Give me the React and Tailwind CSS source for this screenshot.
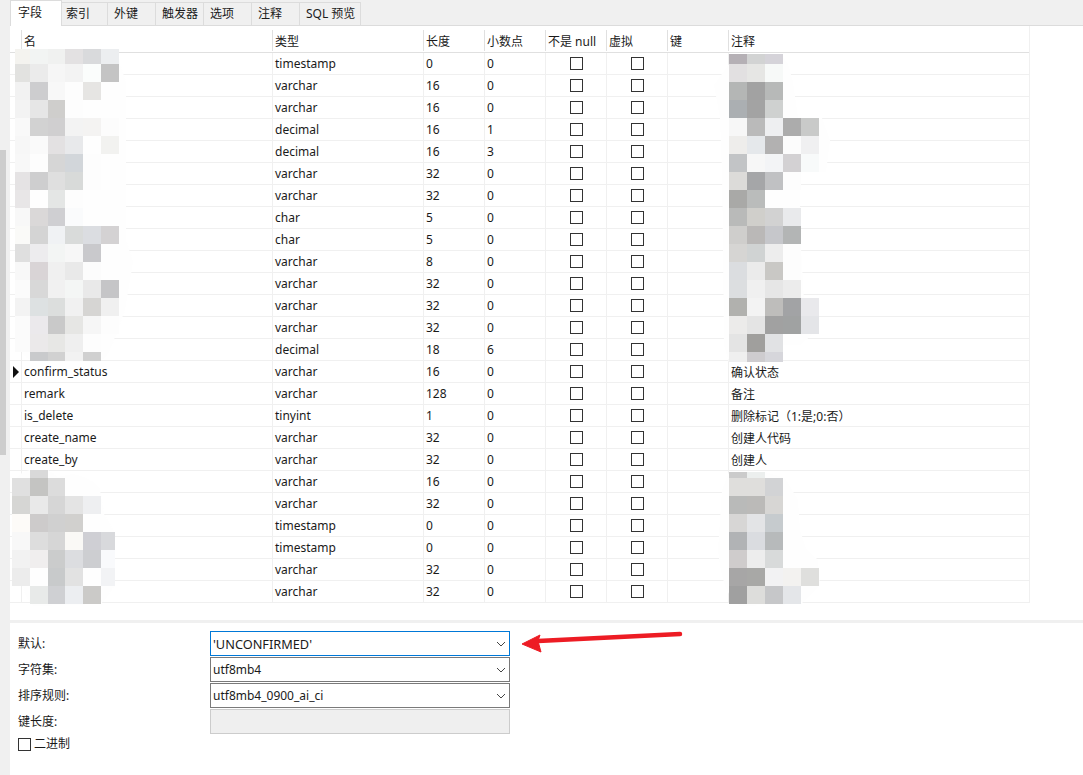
const rows = [
  ["", "timestamp", "0", "0", ""],
  ["", "varchar", "16", "0", ""],
  ["", "varchar", "16", "0", ""],
  ["", "decimal", "16", "1", ""],
  ["", "decimal", "16", "3", ""],
  ["", "varchar", "32", "0", ""],
  ["", "varchar", "32", "0", ""],
  ["", "char", "5", "0", ""],
  ["", "char", "5", "0", ""],
  ["", "varchar", "8", "0", ""],
  ["", "varchar", "32", "0", ""],
  ["", "varchar", "32", "0", ""],
  ["", "varchar", "32", "0", ""],
  ["", "decimal", "18", "6", ""],
  ["confirm_status", "varchar", "16", "0", "确认状态"],
  ["remark", "varchar", "128", "0", "备注"],
  ["is_delete", "tinyint", "1", "0", "删除标记（1:是;0:否）"],
  ["create_name", "varchar", "32", "0", "创建人代码"],
  ["create_by", "varchar", "32", "0", "创建人"],
  ["", "varchar", "16", "0", ""],
  ["", "varchar", "32", "0", ""],
  ["", "timestamp", "0", "0", ""],
  ["", "timestamp", "0", "0", ""],
  ["", "varchar", "32", "0", ""],
  ["", "varchar", "32", "0", ""],
];

const tabs = [
  ["索引", "w-[46px] pl-[4px]"],
  ["外键", "w-[48px] pl-[6px]"],
  ["触发器", "w-[48px] pl-[6px]"],
  ["选项", "w-[48px] pl-[6px]"],
  ["注释", "w-[48px] pl-[6px]"],
  ["SQL 预览", "w-[61px] pl-[6px]"],
];

const F = "fff";
const mosaics = [
  {
    xs: [15, 30, 48, 65, 83, 101, 119],
    ys: [49, 64, 82, 100, 118, 136, 154, 172, 190, 208, 226, 244, 262, 280, 298, 316, 334, 352, 361],
    cells: [
      ["f4f3ef", "f2f4f3", "f0f1f0", "e3e1e2", "d9dadc", "eceef0"],
      ["e2e2e0", "ebebeb", "f6f6f6", "f3f3f3", "fbfdfc", "c4c4c4"],
      ["f2f2f2", "cdcdcf", "f8f8f8", "fdfdfd", "e6e5e3", F],
      ["f3f3f3", "e6e6e6", "cfcecc", "fdfdfd", F, F],
      ["f9f9f9", "d2d2d2", "d0cfd0", "f3f3f3", "f4f3f2", "fcfcfc"],
      ["f7f7f7", "fafafa", "e3e1e2", "e8e9eb", F, "f2f2f0"],
      ["f8f8f8", "fdfdfd", "d6d6d6", "d2d6da", "fdfdfd", F],
      ["e5e3e4", "cececf", "dfdfdf", "d8dad9", "fdfdfd", F],
      ["e8e6e7", F, "e4e6e5", "fdfdfd", F, F],
      ["f8f8f8", "dad8d8", "cfcfd2", "fafbfc", F, F],
      ["fafaf8", "d4d4d4", "f0f2f4", "d9dbda", "dbdde1", "d4d2d3"],
      ["dfdfdf", "edecee", "f3f5f4", "f7f7f7", "c9c9cc", F],
      ["f8f8f8", "d9d4d6", "f0f0f0", "e9e9e9", "fcfcfc", F],
      ["fbfbfb", "d8d8d8", "f1f1f1", "f4f6f5", "e9e9e9", "c5c5c7"],
      ["f3f3f3", "dde1e2", "dcdedd", "f1f1f1", "d6d5d3", "f0f0f0"],
      ["fbfbfb", "ebe9ec", "c9c9c9", "e6e6e4", "f6f6f6", "fdfdfd"],
      ["fbfbfb", "ebe9ea", "e7e7e5", "efefef", "fdfdfd", F],
      [F, "c9cacc", "d1d1d1", "f2f2f2", "d0d0d0", F],
    ],
  },
  {
    xs: [729, 747, 765, 783, 801, 819],
    ys: [54, 64, 82, 100, 118, 136, 154, 172, 190, 208, 226, 244, 262, 280, 298, 316, 334, 352, 362],
    cells: [
      ["b5b0b5", "d2d3d3", "d5d3d9"],
      ["e2e0e1", "e6e6e4", "f7f9f8"],
      ["b4b6b5", "a2a2a2", "b7b9b8"],
      ["abafb2", "a3a3a3", "cfd1d0"],
      ["f7f7f7", "bababa", "eeeff1", "acacac", "c9cac9"],
      ["eeedeb", "e5e8eb", "b2b1b1", "fcfcfc", "f0f0f1"],
      ["c2c4c6", "f7f7f7", "f3f4f6", "d3d1d3", "f8fafa"],
      ["dcdbd9", "a5a6a8", "c0c1c3", "fdfdfd"],
      ["a9a9a7", "babcbb", F, F],
      ["b9bab9", "d0cfcb", "d2d2d2", "e9eaec"],
      ["cfcecc", "bab8b7", "c6c7cb", "b3b5b5"],
      ["d6d5d3", "d0d3d3", "ededed", "fdfdfd"],
      ["dbdde0", "ebebeb", "c9c8c5", "fdfdfd"],
      ["dcdee0", "f0f0f0", "e6e6e6", "ececec"],
      ["b1b1ae", "f3f3f3", "bebdbb", "a2a3a5", "e9e9ec"],
      ["ecebea", "e4e4e4", "a1a1a1", "a0a2a2", "e4e5e8"],
      ["e4e4e4", "a09f9d", "e1e2e4"],
      ["efefef", "cecccf", "d6d6db"],
    ],
  },
  {
    xs: [12, 30, 48, 65, 83, 101, 115],
    ys: [470, 478, 496, 514, 532, 550, 568, 586, 604],
    cells: [
      [F, "d9d9d9", F],
      ["e0e0e0", "c4c4c2", "dcdcdc", F, F],
      ["d6d6d4", "e9e9e9", "d6d6d6", "e4e4e4", "eeeff1"],
      ["fdfbf8", "cdcbcb", "d0d0d0", "d1d0ce", "fefefe"],
      ["f8f8f8", "dddddd", "d6d6d6", "faf9f6", "cfcfd4", "d8d9dc"],
      ["f2f2f2", "f0eeee", "cbcccc", "dcdde0", "cdced1", "f9fafc"],
      ["ececec", F, "c8cacb", "e2e2e2", F, "f2f3f5"],
      [F, "e8eae9", "cfd0d3", "eceef1", "cbcac8", F],
    ],
  },
  {
    xs: [729, 747, 765, 783, 801, 819],
    ys: [472, 478, 496, 514, 532, 550, 568, 586, 604],
    cells: [
      ["cbcbcb", "ecefee"],
      ["dfdedc", "dfdedc", "d2d3d5"],
      ["b9bab9", "bbbab8", "d7d6d4"],
      ["d7d6d5", "e3e4e6", "c6cbce"],
      ["b1b3b5", "dadce0", "b7babb"],
      ["cfcccc", "ededed", "d8dada"],
      ["a7a6a6", "a8a8a6", "f2f2f3", "f3f2f0", "dfdfdd"],
      ["a0a0a0", "dddddb", "c6c7c9", "e4e6e9"],
    ],
  },
];

const blobs = [
  "M15,62 Q15,50 30,49 L48,49 L57,55 L66,50 L100,49 Q119,50 120,64 L126,82 L126,240 L133,262 L125,310 L112,345 Q105,361 95,362 L40,362 Q20,360 18,340 L16,200 Z",
  "M729,54 L775,54 Q783,56 788,64 L793,82 L798,118 L822,118 L830,140 L826,172 L800,172 L800,230 L804,300 L815,320 L812,335 L800,345 L783,345 L783,355 L729,362 L724,345 L723,250 L722,172 L720,118 L714,85 L729,64 Z",
  "M12,490 Q13,474 30,470 L48,470 L58,477 L72,474 Q90,476 100,490 L104,514 L114,532 L115,585 L101,604 L35,606 Q25,600 20,575 L12,515 Z",
  "M729,472 L765,472 L785,478 L798,500 L800,530 L806,548 L818,560 L820,586 L801,604 L740,606 Q722,595 718,550 L722,490 Z",
];

function Overlay() {
  return (
    <svg className="absolute left-0 top-0 pointer-events-none" width="1083" height="775" viewBox="0 0 1083 775">
      {blobs.map((d) => (
        <path key={d} d={d} fill="#fefefe" />
      ))}
      {mosaics.map((m, mi) =>
        m.cells.map((row, ri) =>
          row.map((c, ci) =>
            c === F ? null : (
              <rect
                key={`${mi}-${ri}-${ci}`}
                x={m.xs[ci]}
                y={m.ys[ri]}
                width={m.xs[ci + 1] - m.xs[ci]}
                height={m.ys[ri + 1] - m.ys[ri]}
                fill={`#${c}`}
              />
            )
          )
        )
      )}
      <path d="M680,634 L538,641" stroke="#ed1c24" strokeWidth="4.5" strokeLinecap="round" fill="none" />
      <path d="M522,644 L540,635 L538,641 L541,652 Z" fill="#ed1c24" stroke="#ed1c24" strokeWidth="1" strokeLinejoin="round" />
    </svg>
  );
}

function Check() {
  return <span className="block w-[13px] h-[13px] border border-[#333333] bg-white" />;
}

function Chevron() {
  return (
    <svg width="10" height="6" viewBox="0 0 10 6" className="mr-[3px] shrink-0">
      <path d="M1,1 L5,5 L9,1" fill="none" stroke="#444444" strokeWidth="1" />
    </svg>
  );
}

function Select({ value, active }) {
  return (
    <div
      className={`w-[300px] h-[25px] border flex items-center justify-between pl-[2px] ${
        active ? "border-[#0078d7]" : "border-[#7a7a7a]"
      }`}
    >
      <span className={active ? "text-[12.75px]" : ""}>{value}</span>
      <Chevron />
    </div>
  );
}

const cell = "h-full flex items-center pl-[2px] border-r border-[#f0f0f0]";

function HeaderCell({ w, t }) {
  return (
    <div className={`${w} h-[21px] mb-[1px] pl-[2px] pt-[2px] flex items-center border-l border-[#e0e0e0] shrink-0`}>
      {t}
    </div>
  );
}

function FormRow({ label, children }) {
  return (
    <div className="flex items-center">
      <div className="w-[192px] shrink-0">{label}</div>
      {children}
    </div>
  );
}

function App() {
  return (
    <div
      className="relative w-[1083px] h-[775px] overflow-hidden bg-white flex text-[12px] leading-[16px] text-[#1a1a1a]"
      style={{ fontFamily: '"Noto Sans", "Noto Sans CJK SC", sans-serif' }}
    >
      <div className="w-[10px] shrink-0 bg-[#f0f0f0] pt-[150px]">
        <div className="w-[6px] h-[305px] bg-[#cdcdcd]" />
      </div>
      <div className="flex-1 flex flex-col min-w-0">
        <div className="h-[26px] shrink-0 bg-[#f0f0f0] border-b border-[#dcdcdc] flex items-end">
          <div className="w-[52px] h-[26px] bg-white border border-b-0 border-[#dcdcdc] pl-[7px] pt-[4px] -mb-px">字段</div>
          {tabs.map(([t, w]) => (
            <div key={t} className={`${w} h-[23px] border-r border-t border-[#dcdcdc] flex items-center`}>
              {t}
            </div>
          ))}
        </div>

        <div className="w-[1020px] border-r border-[#f0f0f0]">
          <div className="h-[27px] flex border-b border-[#e0e0e0] items-end">
            <div className="w-[11px] shrink-0" />
            <HeaderCell w="w-[251px]" t="名" />
            <HeaderCell w="w-[151px]" t="类型" />
            <HeaderCell w="w-[61px]" t="长度" />
            <HeaderCell w="w-[61px]" t="小数点" />
            <HeaderCell w="w-[61px]" t="不是 null" />
            <HeaderCell w="w-[61px]" t="虚拟" />
            <HeaderCell w="w-[61px]" t="键" />
            <HeaderCell w="flex-1" t="注释" />
          </div>
          {rows.map((r, i) => (
            <div key={i} className="h-[22px] flex border-b border-[#f0f0f0]">
              <div className="w-[11px] shrink-0 flex items-center">
                {r[0] === "confirm_status" && (
                  <svg width="6" height="12" viewBox="0 0 6 12" className="ml-[3px]">
                    <path d="M0,0 L6,6 L0,12 Z" fill="#111111" />
                  </svg>
                )}
              </div>
              <div className={`${cell} w-[252px] border-l`}>{r[0]}</div>
              <div className={`${cell} w-[151px]`}>{r[1]}</div>
              <div className={`${cell} w-[61px]`}>{r[2]}</div>
              <div className={`${cell} w-[61px]`}>{r[3]}</div>
              <div className={`${cell} w-[61px] justify-center !pl-0`}><Check /></div>
              <div className={`${cell} w-[61px] justify-center !pl-0`}><Check /></div>
              <div className={`${cell} w-[61px]`} />
              <div className="h-full flex items-center pl-[2px] pt-[2px] flex-1">{r[4]}</div>
            </div>
          ))}
        </div>

        <div className="mt-[17px] h-[3px] bg-[#f0f0f0] shrink-0" />

        <div className="pl-[8px] pt-[8px] flex flex-col gap-[1px]">
          <FormRow label="默认:"><Select value="'UNCONFIRMED'" active /></FormRow>
          <FormRow label="字符集:"><Select value="utf8mb4" /></FormRow>
          <FormRow label="排序规则:"><Select value="utf8mb4_0900_ai_ci" /></FormRow>
          <FormRow label="键长度:">
            <div className="w-[300px] h-[25px] border border-[#cccccc] bg-[#efefef]" />
          </FormRow>
          <div className="flex items-center h-[16px] mt-[1px]">
            <Check />
            <span className="ml-[3px]">二进制</span>
          </div>
        </div>
      </div>
      <Overlay />
    </div>
  );
}

export default App;
